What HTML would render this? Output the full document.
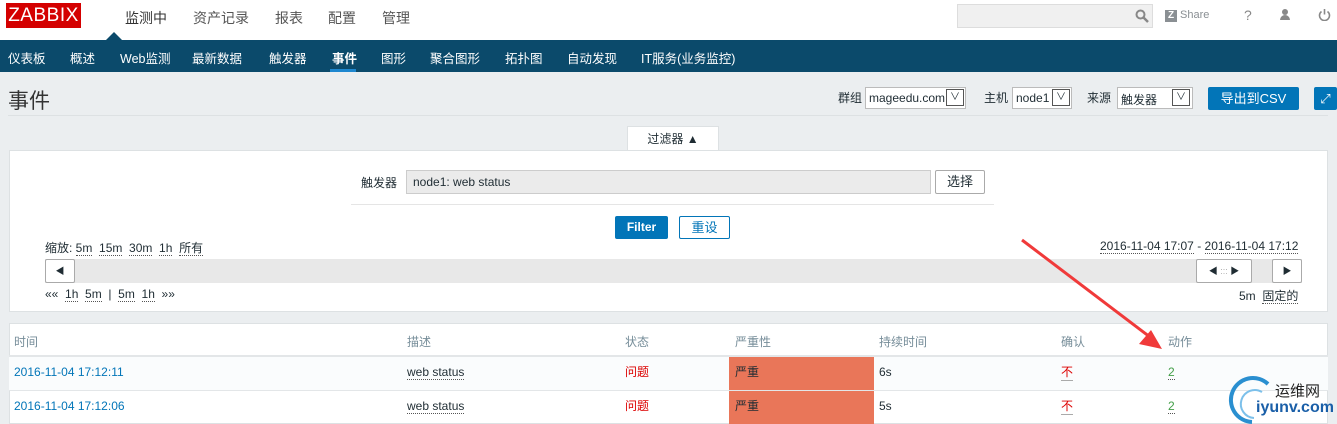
<!DOCTYPE html><html><head><meta charset="utf-8"><style>
*{margin:0;padding:0;box-sizing:border-box}
body{width:1337px;height:424px;overflow:hidden;background:#ebeef0;font-family:"Liberation Sans","Noto Sans CJK SC",sans-serif;font-size:12px;color:#1f2c33;position:relative}
.a{position:absolute;white-space:nowrap}
.d{border-bottom:1px dotted #555}
</style></head><body>
<div class="a" style="left:0;top:0;width:1337px;height:40px;background:#fff"></div>
<div class="a" style="left:6px;top:3px;width:75px;height:25px;background:#d40000;color:#fff;font-size:19px;line-height:25px;text-align:center;letter-spacing:0.5px">ZABBIX</div>
<div class="a" style="left:125px;top:8px;font-size:14px;color:#333">监测中</div>
<div class="a" style="left:193px;top:8px;font-size:14px;color:#555">资产记录</div>
<div class="a" style="left:275px;top:8px;font-size:14px;color:#555">报表</div>
<div class="a" style="left:328px;top:8px;font-size:14px;color:#555">配置</div>
<div class="a" style="left:382px;top:8px;font-size:14px;color:#555">管理</div>
<div class="a" style="left:106px;top:32px;width:0;height:0;border-left:8px solid transparent;border-right:8px solid transparent;border-bottom:8px solid #0b4a6b"></div>
<div class="a" style="left:957px;top:4px;width:196px;height:24px;background:#f0f0f0;border:1px solid #ddd"></div>
<svg class="a" style="left:1135px;top:9px" width="14" height="14"><circle cx="5.5" cy="5.5" r="4" fill="none" stroke="#888" stroke-width="2"/><line x1="8.5" y1="8.5" x2="13" y2="13" stroke="#888" stroke-width="2.5"/></svg>
<div class="a" style="left:1165px;top:10px;width:12px;height:12px;background:#8a8f93;color:#fff;font-size:10px;font-weight:bold;text-align:center;line-height:12px">Z</div>
<div class="a" style="left:1180px;top:9px;color:#8a8f93;font-size:11px">Share</div>
<div class="a" style="left:1244px;top:7px;color:#888;font-size:14px">?</div>
<div class="a" style="left:1282px;top:9px;width:6px;height:6px;background:#888;border-radius:3px"></div>
<div class="a" style="left:1280px;top:15px;width:10px;height:5px;background:#888;border-radius:5px 5px 0 0"></div>
<svg class="a" style="left:1318px;top:8px" width="13" height="13"><path d="M3.5 3.5 A5 5 0 1 0 9.5 3.5" fill="none" stroke="#888" stroke-width="1.6"/><line x1="6.5" y1="1" x2="6.5" y2="6.5" stroke="#888" stroke-width="1.6"/></svg>
<div class="a" style="left:0;top:40px;width:1337px;height:32px;background:#0b4a6b"></div>
<div class="a" style="top:48px;left:8px;color:#fff;font-size:12.5px">
<span style="position:absolute;left:0">仪表板</span><span style="position:absolute;left:62px">概述</span><span style="position:absolute;left:112px">Web监测</span><span style="position:absolute;left:184px">最新数据</span><span style="position:absolute;left:261px">触发器</span><span style="position:absolute;left:324px;font-weight:bold">事件</span><span style="position:absolute;left:373px">图形</span><span style="position:absolute;left:422px">聚合图形</span><span style="position:absolute;left:497px">拓扑图</span><span style="position:absolute;left:559px">自动发现</span><span style="position:absolute;left:633px">IT服务(业务监控)</span></div>
<div class="a" style="left:330px;top:69px;width:26px;height:3px;background:#1e87cf"></div>
<div class="a" style="left:8px;top:85px;font-size:21px;color:#333">事件</div>
<div class="a" style="left:8px;top:115px;width:1320px;height:1px;background:#dde1e3"></div>
<div class="a" style="left:838px;top:89px">群组</div>
<div class="a" style="left:865px;top:87px;width:101px;height:22px;background:#fff;border:1px solid #bbb;padding:3px 3px;font-size:12px">mageedu.com</div>
<div class="a" style="left:946px;top:89px;width:18px;height:17px;border:1px solid #555;text-align:center;font-size:10px;line-height:16px">&#8744;</div>
<div class="a" style="left:984px;top:89px">主机</div>
<div class="a" style="left:1012px;top:87px;width:60px;height:22px;background:#fff;border:1px solid #bbb;padding:3px 3px">node1</div>
<div class="a" style="left:1052px;top:89px;width:18px;height:17px;border:1px solid #555;text-align:center;font-size:10px;line-height:16px">&#8744;</div>
<div class="a" style="left:1087px;top:89px">来源</div>
<div class="a" style="left:1117px;top:87px;width:76px;height:22px;background:#fff;border:1px solid #bbb;padding:3px 3px">触发器</div>
<div class="a" style="left:1172px;top:89px;width:18px;height:17px;border:1px solid #555;text-align:center;font-size:10px;line-height:16px">&#8744;</div>
<div class="a" style="left:1208px;top:87px;width:91px;height:23px;background:#0275b8;color:#fff;border-radius:2px;font-size:13px;text-align:center;line-height:23px">导出到CSV</div>
<div class="a" style="left:1314px;top:87px;width:23px;height:23px;background:#0275b8;color:#fff;border-radius:2px;text-align:center;line-height:23px;font-size:13px">&#10530;</div>
<div class="a" style="left:627px;top:126px;width:92px;height:25px;background:#fff;border:1px solid #dde1e3;border-bottom:none;text-align:center;line-height:25px">过滤器 &#9650;</div>
<div class="a" style="left:9px;top:150px;width:1319px;height:162px;background:#fff;border:1px solid #dde1e3"></div>
<div class="a" style="left:361px;top:174px">触发器</div>
<div class="a" style="left:406px;top:170px;width:525px;height:24px;background:#ebebeb;border:1px solid #ccc;padding:4px 6px">node1: web status</div>
<div class="a" style="left:935px;top:170px;width:50px;height:24px;border:1px solid #aaa;border-radius:2px;text-align:center;line-height:22px;font-size:13px">选择</div>
<div class="a" style="left:351px;top:204px;width:643px;height:1px;background:#e5e5e5"></div>
<div class="a" style="left:615px;top:216px;width:53px;height:23px;background:#0275b8;color:#fff;border-radius:2px;font-weight:bold;text-align:center;line-height:23px">Filter</div>
<div class="a" style="left:679px;top:216px;width:51px;height:23px;border:1px solid #0275b8;border-radius:2px;color:#0275b8;text-align:center;line-height:21px;font-size:13px">重设</div>
<div class="a" style="left:45px;top:239px">缩放: <span class="d">5m</span>&nbsp; <span class="d">15m</span>&nbsp; <span class="d">30m</span>&nbsp; <span class="d">1h</span>&nbsp; <span class="d">所有</span></div>
<div class="a" style="left:1100px;top:239px"><span class="d">2016-11-04 17:07</span> - <span class="d">2016-11-04 17:12</span></div>
<div class="a" style="left:45px;top:259px;width:1257px;height:24px;background:#e8e8e8"></div>
<div class="a" style="left:45px;top:259px;width:30px;height:24px;background:#fff;border:1px solid #aaa;border-radius:2px;text-align:center;line-height:22px;font-size:9px">&#9664;</div>
<div class="a" style="left:1196px;top:259px;width:56px;height:24px;background:#fff;border:1px solid #aaa;border-radius:2px;text-align:center;line-height:22px;font-size:9px">&#9664; <span style="color:#aaa">:::</span> &#9654;</div>
<div class="a" style="left:1272px;top:259px;width:30px;height:24px;background:#fff;border:1px solid #aaa;border-radius:2px;text-align:center;line-height:22px;font-size:9px">&#9654;</div>
<div class="a" style="left:45px;top:287px">«« &nbsp;<span class="d">1h</span>&nbsp; <span class="d">5m</span>&nbsp; | &nbsp;<span class="d">5m</span>&nbsp; <span class="d">1h</span>&nbsp; »»</div>
<div class="a" style="left:1239px;top:287px">5m &nbsp;<span class="d">固定的</span></div>
<div class="a" style="left:9px;top:323px;width:1319px;height:101px;background:#fff;border:1px solid #dde1e3"></div>
<div class="a" style="left:9px;top:355px;width:1319px;height:2px;background:#e3e6e8"></div>
<div class="a" style="left:9px;top:357px;width:1319px;height:33px;background:#fafcfd"></div>
<div class="a" style="left:9px;top:390px;width:1319px;height:1px;background:#e3e6e8"></div>
<div class="a" style="top:333px;left:0;width:1337px;color:#768d99">
<span class="a" style="left:14px">时间</span><span class="a" style="left:407px">描述</span><span class="a" style="left:625px">状态</span><span class="a" style="left:735px">严重性</span><span class="a" style="left:879px">持续时间</span><span class="a" style="left:1061px">确认</span><span class="a" style="left:1168px">动作</span></div>
<div class="a" style="left:729px;top:357px;width:145px;height:33px;background:#e97659"></div>
<div class="a" style="left:729px;top:391px;width:145px;height:33px;background:#e97659"></div>
<div class="a" style="top:365px;left:0;width:1337px">
<span class="a" style="left:14px;color:#0275b8">2016-11-04 17:12:11</span><span class="a d" style="left:407px">web status</span><span class="a" style="left:625px;color:#dc0000;top:-2px">问题</span><span class="a" style="left:735px;top:-2px">严重</span><span class="a" style="left:879px">6s</span><span class="a" style="left:1061px;color:#dc0000;border-bottom:1px solid #aaa;top:-2px">不</span><span class="a d" style="left:1168px;color:#429e47">2</span></div>
<div class="a" style="top:399px;left:0;width:1337px">
<span class="a" style="left:14px;color:#0275b8">2016-11-04 17:12:06</span><span class="a d" style="left:407px">web status</span><span class="a" style="left:625px;color:#dc0000;top:-2px">问题</span><span class="a" style="left:735px;top:-2px">严重</span><span class="a" style="left:879px">5s</span><span class="a" style="left:1061px;color:#dc0000;border-bottom:1px solid #aaa;top:-2px">不</span><span class="a d" style="left:1168px;color:#429e47">2</span></div>
<svg class="a" style="left:0;top:0" width="1337" height="424"><line x1="1022" y1="240" x2="1150" y2="337" stroke="#f03a3a" stroke-width="3"/><polygon points="1162,349 1139,344 1151,330" fill="#f03a3a"/>
<path d="M1268 384 A22 22 0 1 0 1252 422" fill="none" stroke="#2a8fd0" stroke-width="4"/><path d="M1262 392 A14 14 0 1 0 1254 418" fill="none" stroke="#7cc0ea" stroke-width="2"/></svg>
<div class="a" style="left:1275px;top:380px;font-size:15px;color:#222">运维网</div>
<div class="a" style="left:1256px;top:399px;font-size:16px;font-weight:bold;color:#1a5fa8">iyunv.com</div>
</body></html>
